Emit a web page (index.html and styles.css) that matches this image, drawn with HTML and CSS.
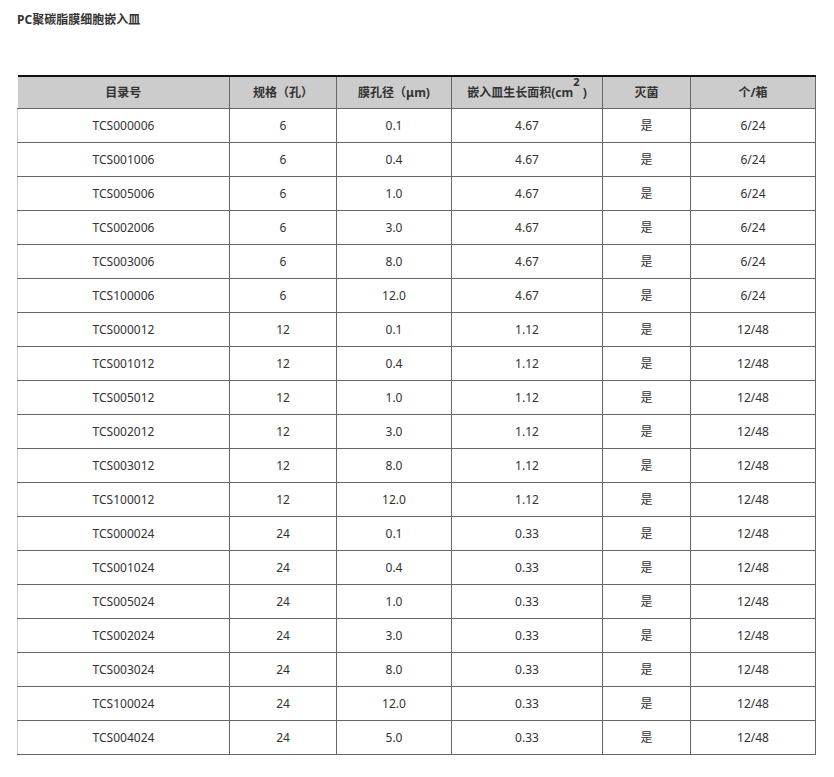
FILE: index.html
```html
<!DOCTYPE html>
<html lang="zh">
<head>
<meta charset="utf-8">
<title>PC聚碳脂膜细胞嵌入皿</title>
<link rel="stylesheet" href="styles.css">
</head>
<body>
<div class="page">
  <h1 class="title">PC聚碳脂膜细胞嵌入皿</h1>
  <table class="spec">
    <colgroup>
      <col class="c1"><col class="c2"><col class="c3"><col class="c4"><col class="c5"><col class="c6">
    </colgroup>
    <thead>
      <tr>
        <th>目录号</th>
        <th>规格（孔）</th>
        <th>膜孔径（μm)</th>
        <th>嵌入皿生长面积(cm<sup>2</sup>&nbsp;)</th>
        <th>灭菌</th>
        <th>个/箱</th>
      </tr>
    </thead>
    <tbody>
      <tr><td>TCS000006</td><td>6</td><td>0.1</td><td>4.67</td><td>是</td><td>6/24</td></tr>
      <tr><td>TCS001006</td><td>6</td><td>0.4</td><td>4.67</td><td>是</td><td>6/24</td></tr>
      <tr><td>TCS005006</td><td>6</td><td>1.0</td><td>4.67</td><td>是</td><td>6/24</td></tr>
      <tr><td>TCS002006</td><td>6</td><td>3.0</td><td>4.67</td><td>是</td><td>6/24</td></tr>
      <tr><td>TCS003006</td><td>6</td><td>8.0</td><td>4.67</td><td>是</td><td>6/24</td></tr>
      <tr><td>TCS100006</td><td>6</td><td>12.0</td><td>4.67</td><td>是</td><td>6/24</td></tr>
      <tr><td>TCS000012</td><td>12</td><td>0.1</td><td>1.12</td><td>是</td><td>12/48</td></tr>
      <tr><td>TCS001012</td><td>12</td><td>0.4</td><td>1.12</td><td>是</td><td>12/48</td></tr>
      <tr><td>TCS005012</td><td>12</td><td>1.0</td><td>1.12</td><td>是</td><td>12/48</td></tr>
      <tr><td>TCS002012</td><td>12</td><td>3.0</td><td>1.12</td><td>是</td><td>12/48</td></tr>
      <tr><td>TCS003012</td><td>12</td><td>8.0</td><td>1.12</td><td>是</td><td>12/48</td></tr>
      <tr><td>TCS100012</td><td>12</td><td>12.0</td><td>1.12</td><td>是</td><td>12/48</td></tr>
      <tr><td>TCS000024</td><td>24</td><td>0.1</td><td>0.33</td><td>是</td><td>12/48</td></tr>
      <tr><td>TCS001024</td><td>24</td><td>0.4</td><td>0.33</td><td>是</td><td>12/48</td></tr>
      <tr><td>TCS005024</td><td>24</td><td>1.0</td><td>0.33</td><td>是</td><td>12/48</td></tr>
      <tr><td>TCS002024</td><td>24</td><td>3.0</td><td>0.33</td><td>是</td><td>12/48</td></tr>
      <tr><td>TCS003024</td><td>24</td><td>8.0</td><td>0.33</td><td>是</td><td>12/48</td></tr>
      <tr><td>TCS100024</td><td>24</td><td>12.0</td><td>0.33</td><td>是</td><td>12/48</td></tr>
      <tr><td>TCS004024</td><td>24</td><td>5.0</td><td>0.33</td><td>是</td><td>12/48</td></tr>
    </tbody>
  </table>
</div>
</body>
</html>
```
FILE: styles.css
```css
html, body {
  margin: 0;
  padding: 0;
  background: #fff;
}
body {
  font-family: "Noto Sans", "Noto Sans CJK SC", "Liberation Sans", sans-serif;
  color: #333;
  font-size: 12px;
}
.page {
  padding: 10px 0 0 17px;
}
.title {
  margin: 0;
  font-size: 12px;
  font-weight: bold;
  line-height: 20px;
  color: #333;
}
.spec {
  margin-top: 45px;
  border-collapse: collapse;
  table-layout: fixed;
  width: 798px;
}
.c1 { width: 212px; }
.c2 { width: 107px; }
.c3 { width: 115px; }
.c4 { width: 151px; }
.c5 { width: 88px; }
.c6 { width: 125px; }
.spec th {
  background: #ccc;
  font-weight: bold;
  height: 31px;
  padding: 0;
  border-top: 2px solid #111;
  border-bottom: 1px solid #666;
  border-left: 1px solid #666;
  border-right: 1px solid #666;
  text-align: center;
  vertical-align: middle;
  line-height: 16px;
}
.spec th:first-child {
  border-left: 0;
}
.spec th sup {
  font-size: 11px;
  line-height: 0;
  position: relative;
  top: -6px;
}
.spec td {
  height: 32px;
  padding: 1px 0 0;
  border: 1px solid #666;
  text-align: center;
  vertical-align: middle;
  line-height: 16px;
}
.spec td:first-child {
  border-left: 1px solid #ccc;
}
```
